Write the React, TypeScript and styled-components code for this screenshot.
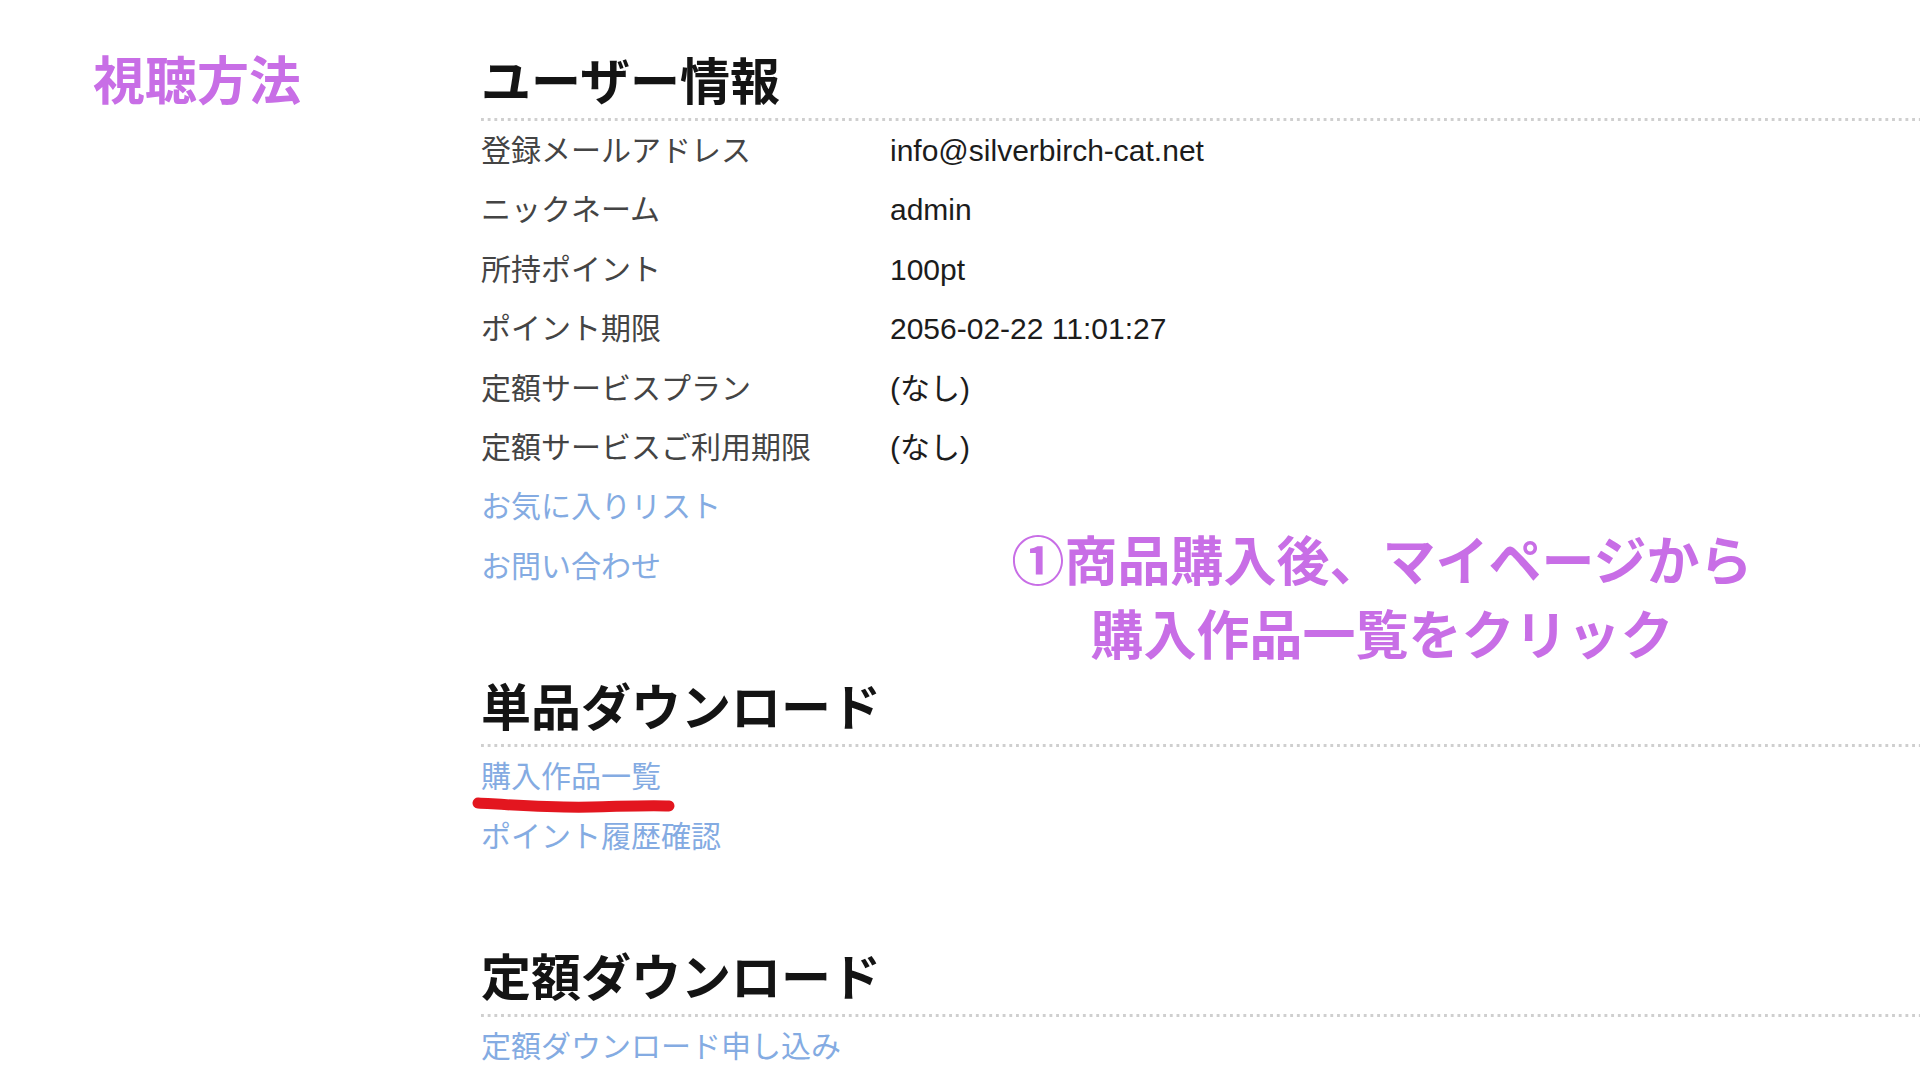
import React from "react";
import styled, { createGlobalStyle } from "styled-components";

const GlobalStyle = createGlobalStyle`
  html, body {
    margin: 0;
    padding: 0;
    background: #ffffff;
  }
  body {
    font-family: "Liberation Sans", "Noto Sans CJK JP", sans-serif;
  }
`;

const Page = styled.div`
  position: relative;
  display: flex;
  align-items: flex-start;
  box-sizing: border-box;
  width: 1920px;
  min-height: 1080px;
  padding: 48px 0 0 93px;
  overflow: hidden;
`;

const SideTitle = styled.h1`
  flex: 0 0 388px;
  margin: 0;
  font-family: "Noto Sans CJK JP", sans-serif;
  font-size: 52px;
  line-height: 60px;
  font-weight: 700;
  color: #c86ee6;
`;

const Main = styled.main`
  flex: 1;
  display: flex;
  flex-direction: column;
  gap: 78px;
`;

const Section = styled.section`
  display: flex;
  flex-direction: column;
`;

const SectionHeading = styled.h2`
  margin: 0;
  padding-bottom: 13px;
  font-family: "Noto Sans CJK JP", sans-serif;
  font-size: 50px;
  line-height: 60px;
  font-weight: 700;
  color: #141414;
  background-image: linear-gradient(to right, #cfcfcf 3px, transparent 3px);
  background-size: 6.7px 3px;
  background-repeat: repeat-x;
  background-position: left bottom;
`;

const InfoRow = styled.div`
  display: grid;
  grid-template-columns: 409px 1fr;
  font-size: 30px;
  line-height: 59.4px;
`;

const Label = styled.span`
  color: #444444;
`;

const Value = styled.span`
  color: #1c1c1c;
`;

const LinkRow = styled.div`
  position: relative;
  font-size: 30px;
  line-height: 59.4px;
`;

const TextLink = styled.a`
  color: #84abe2;
  text-decoration: none;
`;

const Scribble = styled.svg`
  position: absolute;
  left: -9px;
  top: 47px;
  width: 204px;
  height: 22px;
  overflow: visible;
`;

const Callout = styled.div`
  position: absolute;
  left: 982px;
  top: 521px;
  width: 800px;
  margin: 0;
  text-align: center;
  font-family: "Noto Sans CJK JP", sans-serif;
  font-size: 53px;
  line-height: 74px;
  font-weight: 700;
  color: #c86ee6;
`;

const userInfo: [string, string][] = [
  ["登録メールアドレス", "info@silverbirch-cat.net"],
  ["ニックネーム", "admin"],
  ["所持ポイント", "100pt"],
  ["ポイント期限", "2056-02-22 11:01:27"],
  ["定額サービスプラン", "(なし)"],
  ["定額サービスご利用期限", "(なし)"],
];

export default function App() {
  return (
    <>
      <GlobalStyle />
      <Page>
        <SideTitle>視聴方法</SideTitle>
        <Main>
          <Section>
            <SectionHeading>ユーザー情報</SectionHeading>
            {userInfo.map(([label, value]) => (
              <InfoRow key={label}>
                <Label>{label}</Label>
                <Value>{value}</Value>
              </InfoRow>
            ))}
            <LinkRow>
              <TextLink href="#">お気に入りリスト</TextLink>
            </LinkRow>
            <LinkRow>
              <TextLink href="#">お問い合わせ</TextLink>
            </LinkRow>
          </Section>
          <Section>
            <SectionHeading>単品ダウンロード</SectionHeading>
            <LinkRow>
              <TextLink href="#">購入作品一覧</TextLink>
              <Scribble viewBox="0 0 204 22" aria-hidden="true">
                <path
                  d="M6 9 C 40 11, 80 14, 120 13 S 180 11, 197 12"
                  fill="none"
                  stroke="#e3161f"
                  strokeWidth="11"
                  strokeLinecap="round"
                />
              </Scribble>
            </LinkRow>
            <LinkRow>
              <TextLink href="#">ポイント履歴確認</TextLink>
            </LinkRow>
          </Section>
          <Section>
            <SectionHeading>定額ダウンロード</SectionHeading>
            <LinkRow>
              <TextLink href="#">定額ダウンロード申し込み</TextLink>
            </LinkRow>
          </Section>
        </Main>
        <Callout>
          ①商品購入後、マイページから
          <br />
          購入作品一覧をクリック
        </Callout>
      </Page>
    </>
  );
}
